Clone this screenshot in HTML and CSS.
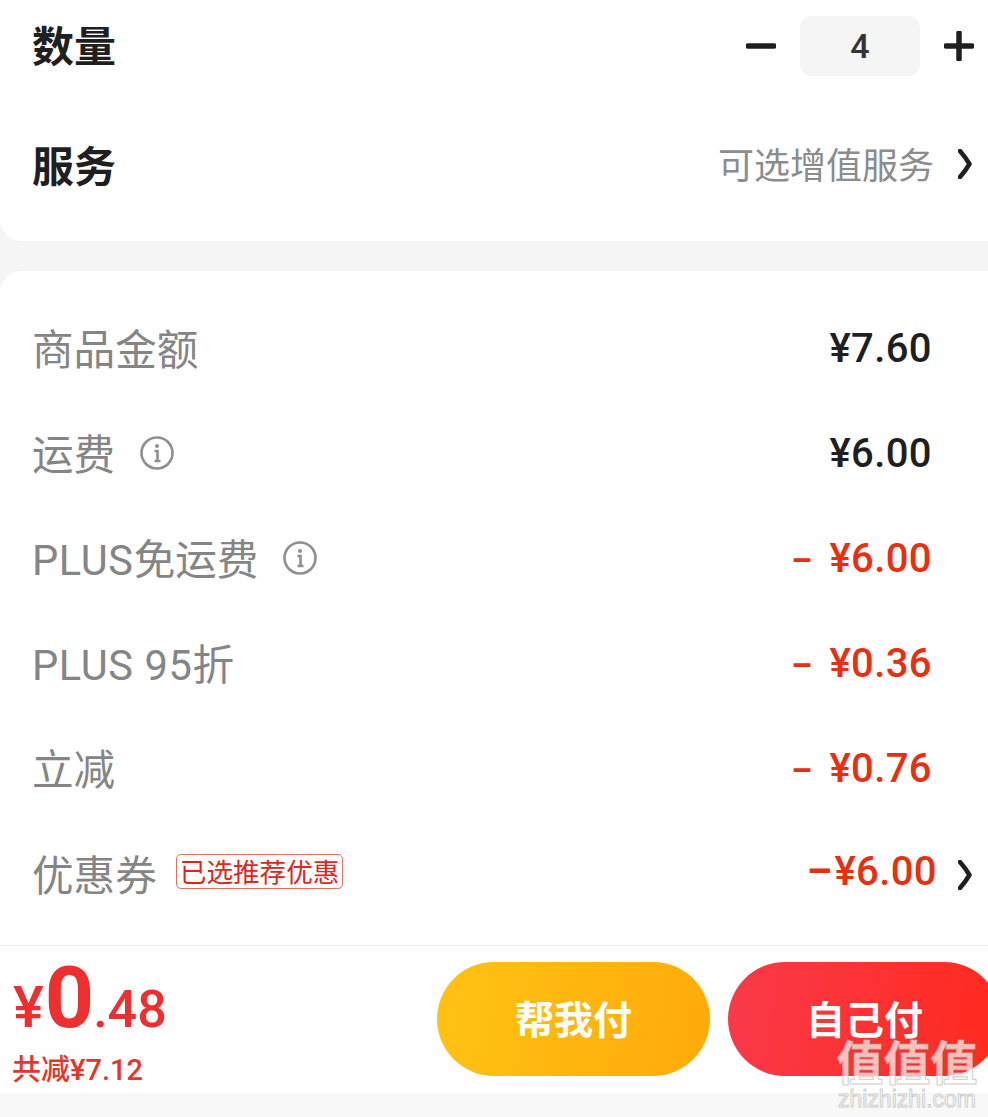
FILE: index.html
```html
<!DOCTYPE html>
<html lang="zh-CN">
<head>
<meta charset="utf-8">
<title>订单</title>
<link rel="stylesheet" href="styles.css">
</head>
<body>
<div class="page">
  <section class="card top">
    <div class="row qty-row">
      <span class="head">数量</span>
      <div class="stepper">
        <svg class="step" viewBox="0 0 30 30"><path d="M2 15H28" /></svg>
        <span class="num">4</span>
        <svg class="step" viewBox="0 0 30 30"><path d="M2 15H28M15 2V28" /></svg>
      </div>
    </div>
    <div class="row svc-row">
      <span class="head">服务</span>
      <div class="right">
        <span class="hint">可选增值服务</span>
        <svg class="chev" viewBox="0 0 14 30"><path d="M2 2Q8 9 11.5 15Q8 21 2 28" /></svg>
      </div>
    </div>
  </section>
  <section class="card detail">
    <div class="line"><span class="lbl">商品金额</span><span class="amt">¥7.60</span></div>
    <div class="line"><span class="lbl">运费<svg class="info" viewBox="0 0 34 34"><circle cx="17" cy="17" r="15.5"/><path d="M14.5 15H17.5V25M14.5 25H20.5"/><circle class="dot" cx="17" cy="10" r="2"/></svg></span><span class="amt">¥6.00</span></div>
    <div class="line"><span class="lbl"><span class="latin">PLUS</span>免运费<svg class="info" viewBox="0 0 34 34"><circle cx="17" cy="17" r="15.5"/><path d="M14.5 15H17.5V25M14.5 25H20.5"/><circle class="dot" cx="17" cy="10" r="2"/></svg></span><span class="amt red"><i class="minus">–</i>¥6.00</span></div>
    <div class="line"><span class="lbl"><span class="latin">PLUS 95</span>折</span><span class="amt red"><i class="minus">–</i>¥0.36</span></div>
    <div class="line"><span class="lbl">立减</span><span class="amt red"><i class="minus">–</i>¥0.76</span></div>
    <div class="line coupon">
      <span class="lbl">优惠券<em class="tag">已选推荐优惠</em></span>
      <span class="coupon-right"><span class="amt red"><i class="dash">–</i>¥6.00</span><svg class="chev" viewBox="0 0 14 30"><path d="M2 2Q8 9 11.5 15Q8 21 2 28" /></svg></span>
    </div>
  </section>
  <footer class="bar">
    <div class="price">
      <div class="total"><span class="yen">¥</span><span class="big">0</span><span class="frac">.48</span></div>
      <div class="saved">共减¥7.12</div>
    </div>
    <div class="btns">
      <button class="btn yellow"><span class="btn-text">帮我付</span></button>
      <button class="btn redbtn"><span class="btn-text">自己付</span></button>
    </div>
  </footer>
  <div class="strip"></div>
  <div class="mark"><div class="mark-cn">值值值</div><div class="mark-en">zhizhizhi.com</div></div>
</div>
</body>
</html>
```
FILE: styles.css
```css
* { box-sizing: border-box; }
html, body { margin: 0; padding: 0; }
body { background: #f5f5f5; font-family: Roboto, "Noto Sans CJK SC", sans-serif; color: #1f1f1f; }
.page { position: relative; width: 988px; height: 1117px; overflow: hidden; background: #f5f5f5; }
.card { background: #fff; }
.top { height: 241px; border-bottom-left-radius: 22px; padding: 0 14px 0 32px; }
.row { display: flex; justify-content: space-between; align-items: center; }
.qty-row { height: 92px; }
.svc-row { height: 150px; padding-bottom: 6px; }
.qty-row .head { margin-bottom: 4px; }
.head { font-size: 42px; font-weight: 700; line-height: 1; font-family: "Noto Sans CJK SC", sans-serif; }
.stepper { display: flex; align-items: center; gap: 24px; }
.step { width: 30px; height: 30px; fill: none; stroke: #1f1f1f; stroke-width: 5.5; stroke-linecap: round; }
.num { width: 120px; height: 60px; background: #f5f5f5; border-radius: 12px; display: flex; justify-content: center; align-items: center; font-size: 34px; font-weight: 500; color: #333; }
.right { display: flex; align-items: center; gap: 24px; }
.hint { font-size: 36px; color: #8c8c8c; font-family: "Noto Sans CJK SC", sans-serif; line-height: 1; margin-bottom: 2px; }
.chev { width: 14px; height: 30px; fill: none; stroke: #1f1f1f; stroke-width: 4.5; stroke-linecap: round; stroke-linejoin: round; margin-right: 2px; }
.detail { margin-top: 30px; height: 674px; border-top-left-radius: 22px; padding: 26px 14px 0 32px; }
.line { height: 105px; display: flex; justify-content: space-between; align-items: center; padding-right: 42px; }
.lbl { display: flex; align-items: center; font-size: 41.6px; color: #858585; line-height: 1; padding-top: 2px; font-family: Roboto, "Noto Sans CJK SC", sans-serif; }
.latin { letter-spacing: .6px; white-space: pre; }
.amt { font-size: 40px; font-weight: 500; color: #1f1f1f; line-height: 1; margin-bottom: 2px; letter-spacing: .4px; }
.red { color: #ea2e10; }
.minus { font-style: normal; font-weight: 700; font-size: 33px; margin-right: 17px; }
.dash { font-style: normal; font-weight: 700; margin-right: 2px; }
.info { width: 34px; height: 34px; margin: 0 0 6px 25px; fill: none; stroke: #8f8f8f; stroke-width: 2.6; }
.info .dot { fill: #8f8f8f; stroke: none; }
.coupon { padding-right: 0; }
.coupon .lbl { padding-top: 4px; }
.tag { font-style: normal; margin: 0 0 10px 19px; height: 35px; padding: 0 3px; border: 1px solid #e8705a; border-radius: 5px; font-size: 26.6px; line-height: 31px; color: #e1251b; font-family: "Noto Sans CJK SC", sans-serif; }
.coupon .amt { margin-bottom: 6px; }
.coupon-right { display: flex; align-items: center; gap: 21px; }
.bar { height: 148px; background: #fff; border-top: 1px solid #f0f0f0; display: flex; justify-content: space-between; padding: 8px 0 0 13px; }
.price { color: #ee2f2f; }
.total { display: flex; align-items: baseline; height: 88px; font-weight: 700; line-height: 88px; }
.yen { font-size: 58px; font-weight: 500; }
.big { font-size: 86px; margin-left: 1px; }
.frac { font-size: 52px; font-weight: 500; margin-left: -1px; }
.saved { font-size: 29px; font-weight: 500; line-height: 34px; margin-top: 11px; margin-left: -1px; color: #e8352a; }
.btns { display: flex; gap: 18px; margin: 8px -13px 0 0; }
.btn { width: 273px; height: 114px; border: 0; border-radius: 57px; color: #fff; font-size: 39px; font-weight: 700; font-family: "Noto Sans CJK SC", sans-serif; padding: 0 0 4px; }
.btn-text { line-height: 1; }
.yellow { background: linear-gradient(100deg, #ffc314, #ffaa0a); }
.redbtn { background: linear-gradient(100deg, #f93a4a, #ff2a1c); }
.strip { height: 24px; background: #f8f8f8; }
.mark { position: absolute; right: 8px; bottom: 5px; width: 146px; text-align: center; color: rgba(255,255,255,.7); -webkit-text-stroke: 1px rgba(190,190,190,.75); }
.mark-cn { font-size: 47px; line-height: 52px; font-family: "Noto Sans CJK SC", sans-serif; font-weight: 700; }
.mark-en { font-size: 23px; line-height: 26px; font-family: "Liberation Sans", sans-serif; }
```
